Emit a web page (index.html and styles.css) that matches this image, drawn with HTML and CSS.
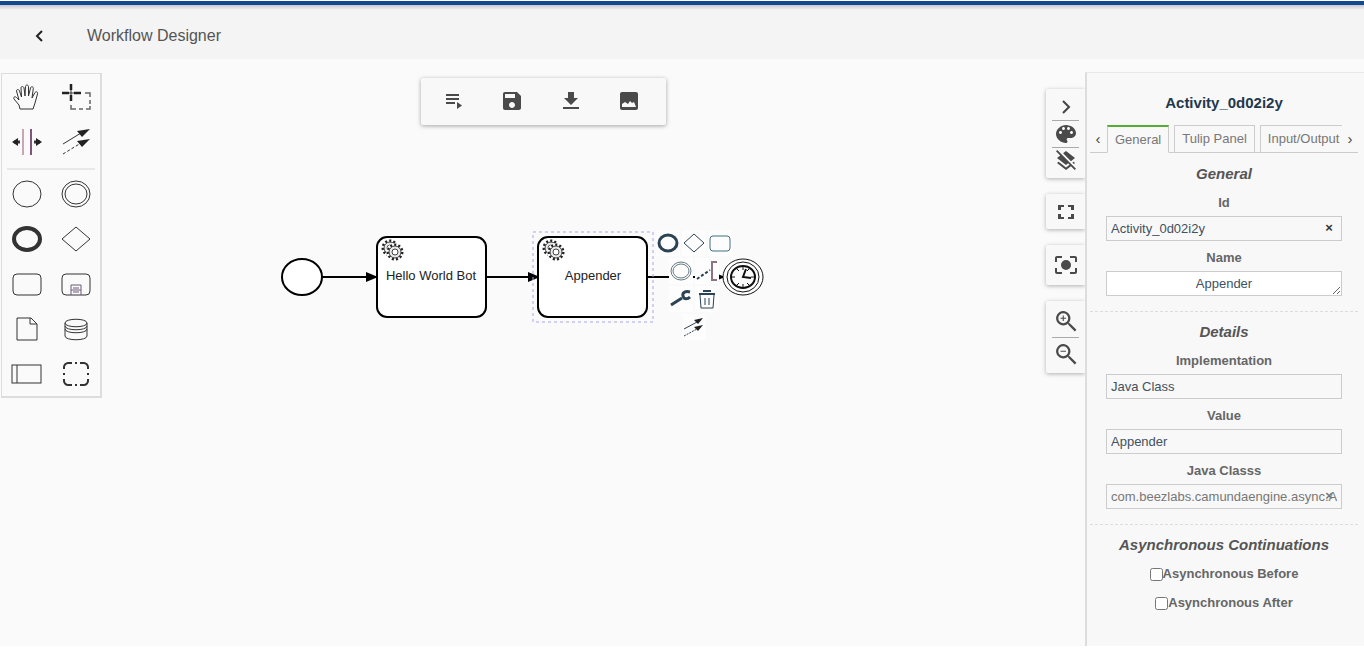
FILE: index.html
```
<!DOCTYPE html>
<html lang="en">
<head>
    <meta charset="UTF-8">
    <meta name="viewport" content="width=device-width, initial-scale=1.0">
    <title>Workflow Designer</title>
    <link rel="stylesheet" href="styles.css">
</head>
<body>
    <header class="page-header">
        <button class="back-button" aria-label="Back">
            <svg width="24" height="24" viewBox="0 0 24 24"><path d="M14 7l-5 5 5 5" fill="none" stroke="#222" stroke-width="2"/></svg>
        </button>
        <h1 class="page-title">Workflow Designer</h1>
    </header>

    <main class="designer">
        <!-- Element palette -->
        <div class="palette">
            <button aria-label="Hand tool"><svg viewBox="0 0 32 32"><path d="M9 28L8 24 3 18c-1-2 1-3 2.500-1.500L8 19 5.500 10c0-2 2.500-2 3 0l2 6-.5-9c0-2 2.500-2 3 0l1 8 .5-9.500c.3-2 2.700-2 3 0v9.500l2-8c.5-2 3-1.500 2.800.5L21 17l3-5.500c1.500-1.500 3.200-.5 2.500 1.500L24 22l-2 6z"/></svg></button>
            <button aria-label="Lasso tool"><svg viewBox="0 0 32 32"><path d="M2 12h7M14 12h7M11 3v6M11 14v6" stroke-width="2.500" stroke="#222"/><path d="M9 12h5M11 9v5"/><path d="M25 12h5v4M30 19v4M30 25v3h-4M23 28h-4M16 28h-5v-4" stroke-width="1.500" stroke="#666"/></svg></button>
            <button aria-label="Space tool"><svg viewBox="0 0 32 32"><path d="M12 3v26" stroke="#c9a5b5" stroke-width="2"/><path d="M20 3v26" stroke="#80557c" stroke-width="2"/><path class="bold" d="M3 16h6M23 16h6"/><path class="solid" d="M1 16l6-4v8zM31 16l-6-4v8z"/></svg></button>
            <button aria-label="Connect tool"><svg viewBox="0 0 32 32"><path d="M3 18l18-11"/><path d="M3 28l18-11" stroke-dasharray="3 2"/><path class="solid" d="M30 3l-8 8-5-6zM30 13l-8 8-5-6z"/></svg></button>
            <hr>
            <button aria-label="Start event"><svg viewBox="0 0 32 32"><ellipse cx="16" cy="16" rx="14" ry="13"/></svg></button>
            <button aria-label="Intermediate event"><svg viewBox="0 0 32 32"><ellipse cx="16" cy="16" rx="14" ry="13"/><ellipse cx="16" cy="16" rx="11" ry="10"/></svg></button>
            <button aria-label="End event"><svg viewBox="0 0 32 32"><ellipse class="thick" cx="16" cy="16" rx="13" ry="11"/></svg></button>
            <button aria-label="Gateway"><svg viewBox="0 0 32 32"><path d="M16 4l14 12-14 12L2 16z"/></svg></button>
            <button aria-label="Task"><svg viewBox="0 0 32 32"><rect x="2" y="6" width="28" height="21" rx="4"/></svg></button>
            <button aria-label="Sub process"><svg viewBox="0 0 32 32"><rect x="2" y="6" width="28" height="21" rx="4"/><path d="M11 27V17h10v10M11 22h10M13 20h6M13 24h6" stroke="#6b5a78"/></svg></button>
            <button aria-label="Data object"><svg viewBox="0 0 32 32"><path d="M6 5h14l6 6v16H6zM19 5v6h7"/></svg></button>
            <button aria-label="Data store"><svg viewBox="0 0 32 32"><path d="M5 10v13c0 5 22 5 22 0V10M5 10c0-5 22-5 22 0s-22 5-22 0M5 13c0 5 22 5 22 0M5 16c0 5 22 5 22 0"/></svg></button>
            <button aria-label="Participant"><svg viewBox="0 0 32 32"><rect x="1" y="7" width="29" height="18"/><path d="M6 7v18"/></svg></button>
            <button aria-label="Group"><svg viewBox="0 0 32 32"><path d="M4 11V9c0-2 2-4 4-4h4M20 5h4c2 0 4 2 4 4v2M28 21v2c0 2-2 4-4 4h-4M12 27H8c-2 0-4-2-4-4v-2M15 5h2M15 27h2M4 15v2M28 15v2" stroke-width="2"/></svg></button>
        </div>

        <div class="workspace">
            <div class="toolbar">
                <button aria-label="Run"><svg viewBox="0 0 24 24"><path d="M4 5h13v2H4zM4 9h13v2H4zM4 13h9v2H4zM15 13v7l5-3.500z"/></svg></button>
                <button aria-label="Save"><svg viewBox="0 0 24 24"><path d="M17 3H5c-1.110 0-2 .9-2 2v14c0 1.100.890 2 2 2h14c1.100 0 2-.9 2-2V7l-4-4zm-5 16c-1.660 0-3-1.340-3-3s1.340-3 3-3 3 1.340 3 3-1.340 3-3 3zm3-10H5V5h10v4z"/></svg></button>
                <button aria-label="Download"><svg viewBox="0 0 24 24"><path d="M19 9h-4V3H9v6H5l7 7 7-7zM4 18v2h16v-2z"/></svg></button>
                <button aria-label="Export image"><svg viewBox="0 0 24 24"><path d="M21 19V5c0-1.100-.9-2-2-2H5c-1.100 0-2 .9-2 2v14c0 1.100.9 2 2 2h14c1.100 0 2-.9 2-2zM5 18v-3l3-2 3 2 2-3 2 2 2-1 2 5z"/></svg></button>
            </div>

            <div class="canvas">
                <svg class="diagram" role="img" aria-label="Workflow diagram">
                    <defs>
                        <marker id="arrow" viewBox="0 0 12 10" refX="11" refY="5" markerWidth="12" markerHeight="10" markerUnits="userSpaceOnUse"><path d="M0 0l12 5-12 5z"/></marker>
                        <g id="gear">
                            <circle r="9" fill="#fff"/>
                            <circle r="7" fill="none" stroke="#222" stroke-width="3" stroke-dasharray="2 2"/>
                            <circle r="6" fill="#e8e8e8" stroke="#444"/>
                            <circle r="3" fill="#fff" stroke="#444"/>
                        </g>
                    </defs>

                    <path class="flow" d="M220 152H275" marker-end="url(#arrow)"/>
                    <path class="flow" d="M384 152H437" marker-end="url(#arrow)"/>
                    <path class="flow" d="M545 152H622" marker-end="url(#arrow)"/>

                    <ellipse class="shape" cx="200" cy="152" rx="20" ry="18"/>
                    <rect class="shape" x="275" y="112" width="109" height="80" rx="10"/>
                    <use href="#gear" x="288" y="123"/>
                    <use href="#gear" x="293" y="127"/>
                    <text x="329" y="155">Hello World Bot</text>

                    <rect class="selection" x="431" y="107" width="120" height="90"/>
                    <rect class="shape" x="436" y="112" width="109" height="80" rx="10"/>
                    <use href="#gear" x="449" y="123"/>
                    <use href="#gear" x="454" y="127"/>
                    <text x="491" y="155">Appender</text>

                    <g class="timer">
                        <ellipse cx="641" cy="152" rx="20" ry="18"/>
                        <ellipse cx="641" cy="152" rx="16" ry="15"/>
                        <ellipse cx="641" cy="152" rx="12" ry="11" stroke-width="2"/>
                        <path d="M641 142v3M641 159v3M630 152h3M649 152h3M635 144l2 2M647 144l-2 2M635 160l2-2M647 160l-2-2"/>
                        <path d="M644 144l-3 8 8 1" stroke-width="2"/>
                    </g>
                </svg>

                <!-- Actions for the selected task -->
                <div class="context-pad">
                    <div class="pad-row">
                        <button aria-label="Append end event"><svg viewBox="0 0 24 24"><ellipse class="thick" cx="12" cy="12" rx="9" ry="8"/></svg></button>
                        <button aria-label="Append gateway"><svg viewBox="0 0 24 24"><path d="M12 3l10 9-10 9-10-9z"/></svg></button>
                        <button aria-label="Append task"><svg viewBox="0 0 24 24"><rect x="2" y="5" width="20" height="15" rx="3" stroke="#427082"/></svg></button>
                    </div>
                    <div class="pad-row">
                        <button aria-label="Append intermediate event"><svg viewBox="0 0 24 24"><g stroke="#667a85"><ellipse cx="12" cy="12" rx="10" ry="9"/><ellipse cx="12" cy="12" rx="8" ry="7"/></g></svg></button>
                        <button aria-label="Add annotation"><svg viewBox="0 0 24 24"><path d="M2 20l13-9" stroke-width="2" stroke-dasharray="3 2"/><path d="M22 3h-5v18h5" stroke="#8f7384" stroke-width="2"/></svg></button>
                    </div>
                    <div class="pad-row">
                        <button aria-label="Change type"><svg viewBox="0 0 24 24"><path d="M2 18l11-7" stroke-width="3"/><path d="M21 5c-4-1-8 0-7 4s5 3 7 1" stroke-width="3"/></svg></button>
                        <button aria-label="Remove"><svg viewBox="0 0 24 24"><path d="M5 8l1 13h12l1-13M10 11v7M14 11v7"/><path d="M4 7h16M8 4h8" stroke-width="2"/></svg></button>
                    </div>
                    <div class="pad-row">
                        <button aria-label="Connect"><svg viewBox="0 0 24 24"><path d="M2 14l13-7"/><path d="M2 21l13-7" stroke-dasharray="2 1"/><path class="solid" d="M21 3l-5 6-4-4zM21 10l-5 6-4-4z"/></svg></button>
                    </div>
                </div>
            </div>
        </div>

        <div class="side-tools">
            <div class="tool-group">
                <button aria-label="Collapse panel"><svg viewBox="0 0 24 24"><path d="M9 6l6 6-6 6" fill="none" stroke="#444" stroke-width="2"/></svg></button>
                <button aria-label="Colours"><svg viewBox="0 0 24 24"><path d="M12 3c-4.970 0-10 4.030-10 9s5.030 9 10 9c.830 0 1.500-.670 1.500-1.500 0-.390-.150-.740-.390-1.010-.230-.260-.380-.610-.380-.990 0-.830.670-1.500 1.500-1.500H17c2.760 0 5-2.240 5-5 0-4.420-5.030-8-10-8zm-5.500 9c-.830 0-1.500-.670-1.500-1.500S5.670 9 6.500 9 8 9.670 8 10.500 7.330 12 6.500 12zm3-4C8.670 8 8 7.330 8 6.500S8.670 5 9.500 5s1.500.670 1.500 1.500S10.330 8 9.500 8zm5 0c-.830 0-1.500-.670-1.500-1.500S13.670 5 14.500 5s1.500.670 1.500 1.500S15.330 8 14.500 8zm3 4c-.830 0-1.500-.670-1.500-1.500S16.670 9 17.500 9s1.500.670 1.500 1.500-.670 1.500-1.500 1.500z"/></svg></button>
                <button aria-label="Clear layers"><svg viewBox="0 0 24 24"><path d="M19.810 14.990l1.190-.920-1.430-1.430-1.190.920 1.430 1.430zm-.450-4.720L21 9l-9-7-2.910 2.270 7.870 7.870 2.400-1.870zM3.270 1L2 2.270l4.220 4.220L3 9l1.630 1.270L12 16l2.100-1.630 1.430 1.430L12 18.540l-7.370-5.730L3 14.070l9 7 4.950-3.850L20.730 21 22 19.730 3.270 1z"/></svg></button>
            </div>
            <div class="tool-group">
                <button aria-label="Fullscreen"><svg viewBox="0 0 24 24"><path d="M7 14H4v5h6v-2H7v-3zm-3-4h3V7h3V5H4v5zm13 7h-3v2h6v-5h-3v3zM14 5v2h3v3h3V5h-6z"/></svg></button>
            </div>
            <div class="tool-group center-group">
                <button aria-label="Center diagram"><svg viewBox="0 0 24 24"><path d="M12 7a5 5 0 1 0 0 10 5 5 0 0 0 0-10zM3 15H1v4c0 1.100.9 2 2 2h5v-2H3v-4zM3 5h5V3H3c-1.100 0-2 .9-2 2v4h2V5zm18-2h-5v2h5v4h2V5c0-1.100-.9-2-2-2zm0 16h-5v2h5c1.100 0 2-.9 2-2v-4h-2v4z"/></svg></button>
            </div>
            <div class="tool-group zoom-group">
                <button aria-label="Zoom in"><svg viewBox="2 2 20 20"><path d="M15.500 14h-.790l-.280-.270A6.500 6.500 0 1 0 13.730 14.430l.270.280v.790l6 5.990L21.490 20zm-6 0a4.500 4.500 0 1 1 0-9 4.500 4.500 0 0 1 0 9zM12 10h-2v2H9v-2H7V9h2V7h1v2h2z"/></svg></button>
                <button aria-label="Zoom out"><svg viewBox="2 2 20 20"><path d="M15.500 14h-.790l-.280-.270A6.500 6.500 0 1 0 13.730 14.430l.270.280v.790l6 5.990L21.490 20zm-6 0a4.500 4.500 0 1 1 0-9 4.500 4.500 0 0 1 0 9zM7 9h5v1H7z"/></svg></button>
            </div>
        </div>

        <aside class="properties">
            <h2 class="element-title">Activity_0d02i2y</h2>
            <nav class="tabs">
                <button class="tab-scroll" aria-label="Previous tabs">‹</button>
                <div class="tab-list">
                    <a href="#general" class="tab active">General</a>
                    <a href="#tulip" class="tab">Tulip Panel</a>
                    <a href="#io" class="tab">Input/Output</a>
                </div>
                <button class="tab-scroll" aria-label="Next tabs">›</button>
            </nav>

            <section class="group" id="general">
                <h3>General</h3>
                <div class="field">
                    <label for="elementId">Id</label>
                    <div class="control">
                        <input type="text" id="elementId" value="Activity_0d02i2y">
                        <button class="clear" aria-label="Clear id">×</button>
                    </div>
                </div>
                <div class="field">
                    <label for="elementName">Name</label>
                    <textarea id="elementName" rows="1">Appender</textarea>
                </div>
            </section>

            <section class="group">
                <h3>Details</h3>
                <div class="field">
                    <label for="implementation">Implementation</label>
                    <select id="implementation">
                        <option>Java Class</option>
                    </select>
                </div>
                <div class="field">
                    <label for="value">Value</label>
                    <select id="value">
                        <option>Appender</option>
                    </select>
                </div>
                <div class="field">
                    <label for="javaClass">Java Classs</label>
                    <div class="control">
                        <input type="text" id="javaClass" class="muted" value="com.beezlabs.camundaengine.async.Appender">
                        <button class="clear muted" aria-label="Clear class">×</button>
                    </div>
                </div>
            </section>

            <section class="group">
                <h3>Asynchronous Continuations</h3>
                <div class="check">
                    <input type="checkbox" id="asyncBefore"><label for="asyncBefore">Asynchronous Before</label>
                </div>
                <div class="check">
                    <input type="checkbox" id="asyncAfter"><label for="asyncAfter">Asynchronous After</label>
                </div>
            </section>
        </aside>
    </main>
</body>
</html>
```
FILE: styles.css
```
:root {
    --brand-blue: #114a93;
    --page-bg: #fafafa;
    --panel-bg: #f8f8f8;
    --icon: #4a4a4a;
    --line: #ccc;
    --label: #666;
}

* {
    box-sizing: border-box;
}

body {
    margin: 0;
    padding: 1px 0 4px;
    min-height: 100vh;
    display: flex;
    flex-direction: column;
    background: #fff;
    font-family: "Liberation Sans", Arial, sans-serif;
    font-size: 13px;
}

button {
    padding: 0;
    border: 0;
    background: transparent;
    font-family: inherit;
    display: flex;
    align-items: center;
    justify-content: center;
    cursor: pointer;
}

/* HEADER */
.page-header {
    height: 58px;
    display: flex;
    align-items: center;
    padding: 8px 28px 0;
    gap: 35px;
    border-top: 4px solid var(--brand-blue);
    background: linear-gradient(#c8c8c8, #f4f4f4 5px);
}

.page-title {
    margin: 0;
    font-size: 16px;
    font-weight: normal;
    color: #555;
}

.designer {
    flex: 1;
    display: flex;
    align-items: flex-start;
    background: var(--page-bg);
}

/* PALETTE */
.palette {
    width: 101px;
    margin: 14px 0 0 1px;
    display: grid;
    grid-template-columns: 1fr 1fr;
    grid-auto-rows: 45px;
    grid-template-rows: 45px 45px 7px;
    border: 1px solid #ddd;
    border-right: 2px solid #ddd;
    border-bottom: 2px solid #ddd;
}

.palette hr {
    grid-column: 1 / -1;
    width: 88px;
    height: 2px;
    margin: 4px auto 0;
    border: 0;
    background: #e8e8e8;
}

.palette svg {
    width: 32px;
    height: 32px;
    fill: none;
    stroke: #333;
    stroke-width: 1;
}

.palette .bold {
    stroke-width: 3;
}

.palette .thick {
    stroke-width: 4;
}

.palette .solid,
.context-pad .solid {
    fill: #222;
    stroke: none;
}

/* WORKSPACE */
.workspace {
    flex: 1;
    min-width: 0;
    align-self: stretch;
    display: flex;
    flex-direction: column;
}

.toolbar {
    width: 245px;
    height: 47px;
    margin: 19px 0 0 319px;
    padding: 0 8px 2px 4px;
    display: flex;
    background: var(--panel-bg);
    border-radius: 2px;
    box-shadow: 0 1px 4px rgba(0, 0, 0, 0.35);
}

.toolbar button {
    flex: 1;
}

.toolbar svg {
    width: 24px;
    height: 24px;
    fill: var(--icon);
}

.canvas {
    flex: 1;
    position: relative;
}

.diagram {
    display: block;
    width: 100%;
    height: 100%;
}

.diagram text {
    font-size: 13px;
    text-anchor: middle;
    fill: #222;
}

.shape {
    fill: #fff;
    stroke: #000;
    stroke-width: 2;
}

.flow {
    stroke: #000;
    stroke-width: 2;
}

.selection {
    fill: none;
    stroke: #aaa5ee;
    stroke-dasharray: 3 3;
}

.timer {
    fill: #fff;
    stroke: #111;
}

.context-pad {
    position: absolute;
    left: 554px;
    top: 105px;
    display: grid;
    gap: 2px;
}

.pad-row {
    display: flex;
    justify-content: center;
    gap: 2px;
}

.pad-row button {
    width: 24px;
    height: 26px;
    background: #fdfdfd;
}

.pad-row svg {
    width: 24px;
    height: 24px;
    fill: none;
    stroke: #2b4354;
}

.pad-row .thick {
    stroke-width: 3;
}

/* SIDE TOOLS */
.side-tools {
    width: 39px;
    margin-top: 30px;
    display: flex;
    flex-direction: column;
    gap: 16px;
}

.tool-group {
    padding: 4px 6px;
    background: var(--panel-bg);
    border-radius: 2px 0 0 2px;
    box-shadow: 0 1px 4px rgba(0, 0, 0, 0.3);
}

.tool-group button {
    width: 27px;
    height: 27px;
}

.tool-group button + button {
    border-top: 1px solid #aaa;
}

.tool-group svg {
    width: 24px;
    height: 24px;
    fill: var(--icon);
}

.center-group button {
    height: 32px;
}

.zoom-group button {
    height: 32px;
}

.zoom-group svg {
    width: 22px;
    height: 22px;
}

/* PROPERTIES PANEL */
.properties {
    width: 279px;
    align-self: stretch;
    margin-top: 13px;
    padding: 20px 6px 0 3px;
    position: relative;
    background: var(--panel-bg);
    border-left: 2px solid #ddd;
    border-top: 1px solid #e8e8e8;
    text-align: center;
}

.element-title {
    margin: 0 0 12px;
    font-size: 15px;
    line-height: 20px;
    color: #22384d;
}

.tabs {
    display: flex;
    height: 28px;
    border-bottom: 1px solid var(--line);
}

.tab-scroll {
    width: 16px;
    font-size: 15px;
    color: #444;
}

.tab-list {
    flex: 1;
    min-width: 0;
    display: flex;
    gap: 5px;
    height: 28px;
    padding-left: 1px;
    overflow: hidden;
}

.tab {
    padding: 0 7px;
    border: 1px solid var(--line);
    background: var(--panel-bg);
    color: #777;
    line-height: 26px;
    text-decoration: none;
    white-space: nowrap;
}

.tab.active {
    border-top: 2px solid #55ad35;
    border-bottom-color: var(--panel-bg);
    line-height: 25px;
}

.group {
    padding: 11px 16px 15px;
}

.group + .group {
    padding-top: 10px;
    border-top: 1px dashed #ddd;
}

.group h3 {
    margin: 0 0 10px;
    font-size: 15px;
    line-height: 20px;
    font-style: italic;
    color: #555;
}

.field + .field {
    margin-top: 8px;
}

.field label,
.check label {
    display: block;
    font-weight: bold;
    line-height: 18px;
    color: var(--label);
}

.field label {
    margin-bottom: 4px;
}

.control {
    position: relative;
}

.field input,
.field select,
.field textarea {
    display: block;
    width: 100%;
    height: 25px;
    margin: 0;
    padding: 0 4px;
    border: 1px solid var(--line);
    border-radius: 0;
    background: transparent;
    font-family: inherit;
    font-size: 13px;
    color: #41515f;
    appearance: none;
}

.field textarea {
    padding: 4px;
    line-height: 15px;
    background: #fff;
    text-align: center;
    overflow: hidden;
    resize: vertical;
}

.field .muted {
    color: #777;
}

.clear {
    position: absolute;
    top: 0;
    right: 6px;
    width: 14px;
    height: 23px;
    font-size: 13px;
    font-weight: bold;
    color: #333;
}

.check {
    display: flex;
    align-items: center;
    justify-content: center;
}

.check + .check {
    margin-top: 11px;
}

.check input {
    width: 13px;
    height: 13px;
    margin: 0;
}
```
